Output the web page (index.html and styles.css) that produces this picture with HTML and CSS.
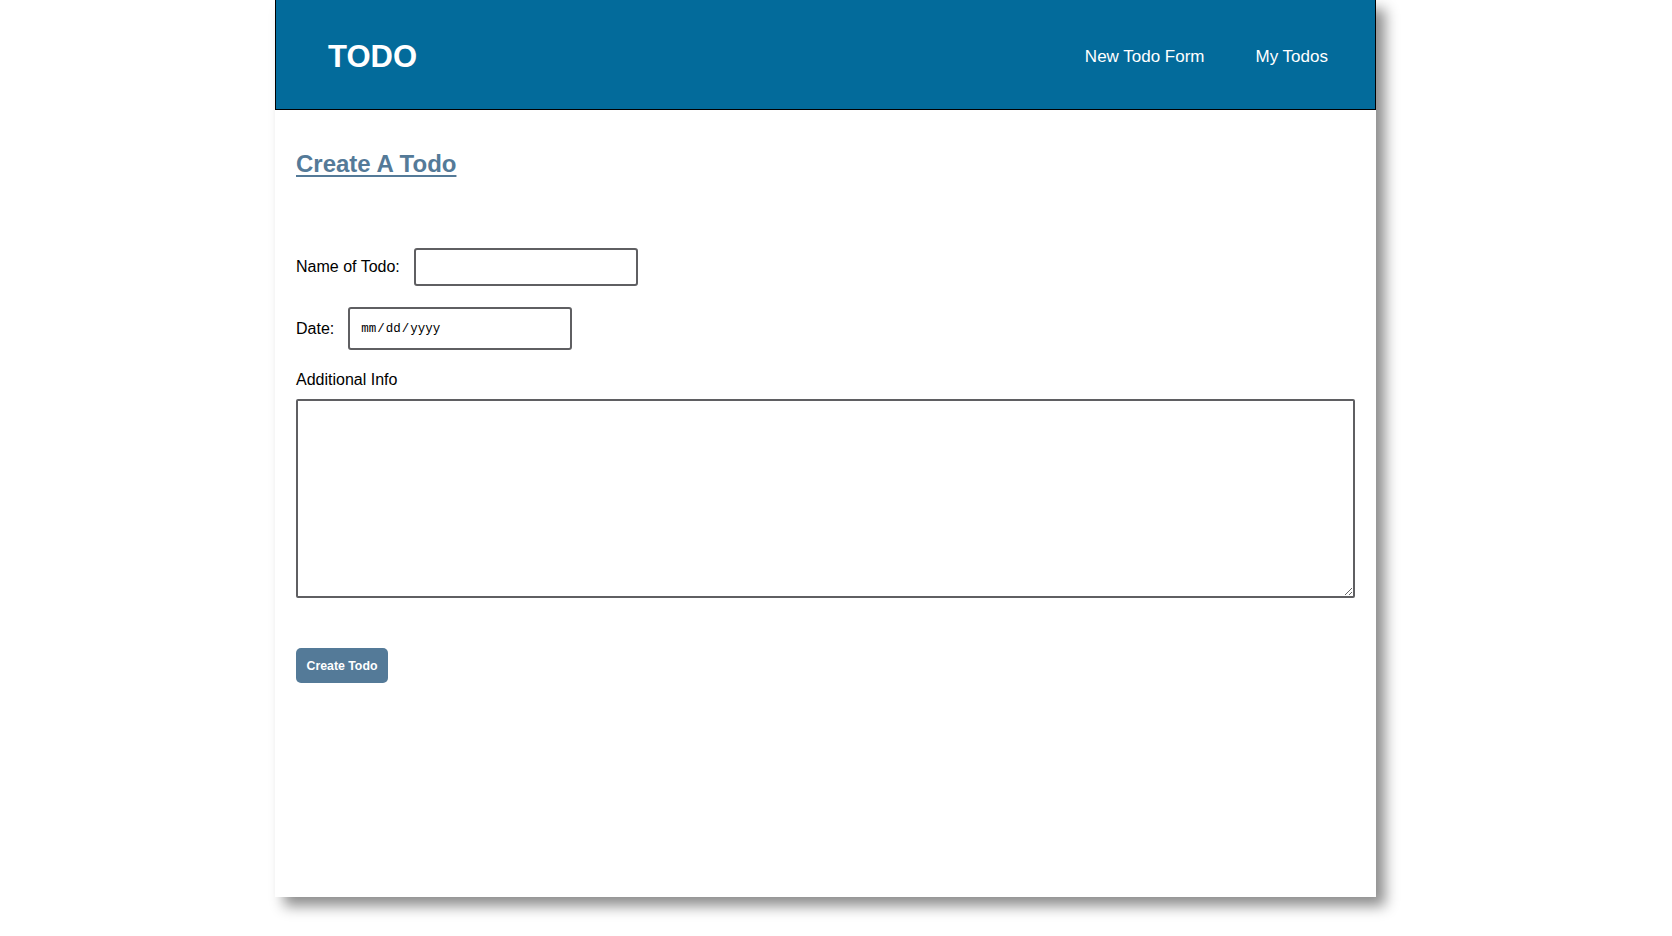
FILE: index.html
```html
<!DOCTYPE html>
<html lang="en">
<head>
<meta charset="utf-8">
<title>TODO</title>
<link rel="stylesheet" href="styles.css">
</head>
<body>
<div class="app">
  <header class="topbar">
    <div class="brand">TODO</div>
    <nav class="nav">
      <a class="nav-link" href="#">New Todo Form</a>
      <a class="nav-link" href="#">My Todos</a>
    </nav>
  </header>
  <main class="content">
    <h2 class="page-title">Create A Todo</h2>
    <form class="todo-form">
      <div class="field-row row-name">
        <label class="field-label" for="name">Name of Todo:</label>
        <input class="text-input" id="name" type="text">
      </div>
      <div class="field-row row-date">
        <label class="field-label" for="date">Date:</label>
        <input class="date-input" id="date" type="date">
      </div>
      <label class="block-label" for="info">Additional Info</label>
      <textarea class="info-area" id="info"></textarea>
      <button class="submit-btn" type="button">Create Todo</button>
    </form>
  </main>
</div>
</body>
</html>
```

FILE: styles.css
```css
html, body {
  margin: 0;
  padding: 0;
  background: #ffffff;
}

body {
  font-family: "Liberation Sans", Arial, sans-serif;
  color: #000;
  padding-bottom: 39px;
}

.app {
  width: 1101px;
  height: 897px;
  margin-left: 275px;
  background: #fff;
  box-shadow: 9px 9px 13px rgba(0, 0, 0, 0.45);
  box-sizing: border-box;
}

.topbar {
  box-sizing: border-box;
  height: 110px;
  background: #036b9b;
  border: 1px solid #000;
  border-top: 0;
  display: flex;
  align-items: center;
  justify-content: space-between;
  padding: 4px 47px 0 52px;
}

.brand {
  color: #fff;
  font-weight: bold;
  font-size: 31px;
}

.nav {
  display: flex;
  gap: 51px;
  padding-top: 1px;
}

.nav-link {
  color: #fff;
  text-decoration: none;
  font-size: 17px;
}

.content {
  padding: 40px 21px 0 21px;
}

.page-title {
  margin: 0;
  font-size: 24px;
  font-weight: bold;
  color: #547a98;
  text-decoration: underline;
  text-underline-offset: 3px;
}

.todo-form {
  margin-top: 70px;
  display: flex;
  flex-direction: column;
  align-items: flex-start;
}

.field-row {
  display: flex;
  align-items: center;
}

.row-date {
  margin-top: 21px;
}

.field-label {
  font-size: 16px;
}

.row-name .field-label {
  margin-right: 14px;
}

.row-date .field-label {
  margin-right: 14px;
}

.text-input,
.date-input,
.info-area {
  box-sizing: border-box;
  border: 2px solid #5f5f62;
  border-radius: 3px;
  background: #fff;
  outline: none;
}

.text-input {
  width: 224px;
  height: 38px;
  padding: 0 8px;
  font-size: 16px;
}

.date-input {
  width: 224px;
  height: 43px;
  padding: 0 10px;
  font-family: "Liberation Mono", monospace;
  font-size: 12.5px;
  color: #000;
}

.date-input::-webkit-calendar-picker-indicator {
  display: none;
}

.block-label {
  margin-top: 20px;
  font-size: 16px;
  line-height: 19px;
}

.info-area {
  margin-top: 10px;
  width: 100%;
  height: 199px;
  border-radius: 2px;
  font-family: "Liberation Sans", Arial, sans-serif;
}

.submit-btn {
  margin-top: 50px;
  width: 92px;
  height: 35px;
  border: none;
  border-radius: 5px;
  background: #547a98;
  color: #fff;
  font-family: "Liberation Sans", Arial, sans-serif;
  font-weight: bold;
  font-size: 12.3px;
  padding: 0;
}
```
